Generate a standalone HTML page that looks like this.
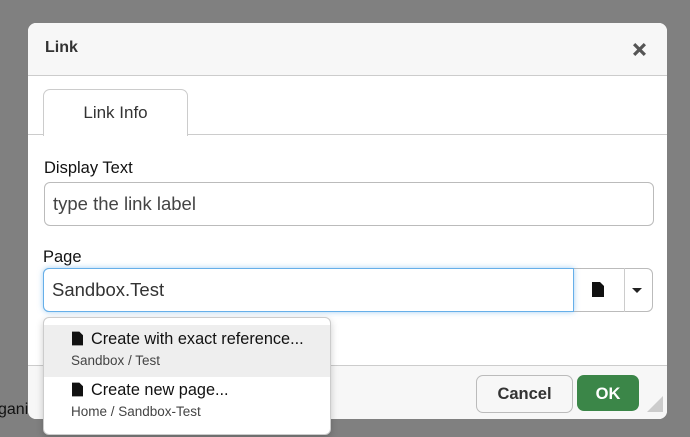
<!DOCTYPE html>
<html><head><style>
body{margin:0;width:690px;height:437px;background:#808080;position:relative;overflow:hidden;font-family:"Liberation Sans",Arial,sans-serif;color:#333}
.a{position:absolute}
.dlg{left:28px;top:23px;width:639px;height:396px;background:#fff;border-radius:8px;overflow:hidden}
.hdr{left:0;top:0;width:639px;height:52px;background:#f7f7f7;border-bottom:1px solid #ccc}
.fld{border:1px solid #bbb;border-radius:6px;background:#fff;box-sizing:border-box}
</style></head><body>
<div class="a" style="left:-2px;top:401px;font-size:16px;color:#111">gani</div>
<div class="a dlg">
 <div class="a hdr"></div>
 <div class="a" style="left:17px;top:16px;font-size:16px;font-weight:bold;color:#333">Link</div>
 <svg class="a" style="left:604px;top:19px" width="15" height="15" viewBox="0 0 14 14"><path d="M2 2L12 12M12 2L2 12" stroke="#555" stroke-width="3"/></svg>
 <div class="a" style="left:0;top:111px;width:639px;border-top:1px solid #ccc"></div>
 <div class="a" style="left:15px;top:66px;width:143px;height:46px;border:1px solid #ccc;border-bottom:none;border-radius:7px 7px 0 0;background:#fff;font-size:17px;text-align:center;line-height:46px">Link Info</div>
 <div class="a" style="left:16px;top:136px;font-size:16.5px;color:#111">Display Text</div>
 <div class="a fld" style="left:16px;top:159px;width:610px;height:44px;padding-left:8px;line-height:42px;font-size:18.5px;color:#444">type the link label</div>
 <div class="a" style="left:15px;top:225px;font-size:16.5px;color:#111">Page</div>
 <div class="a fld" style="left:15px;top:245px;width:610px;height:44px;"></div>
 <div class="a" style="left:15px;top:245px;width:531px;height:44px;border:1px solid #66afe9;border-radius:6px 0 0 6px;box-sizing:border-box;box-shadow:0 0 6px rgba(102,175,233,.6);padding-left:8px;line-height:42px;font-size:18.5px;color:#333;background:#fff">Sandbox.Test</div>
 <div class="a" style="left:596px;top:245px;height:44px;border-left:1px solid #ccc"></div>
 <svg class="a" style="left:564px;top:259px" width="12" height="15" viewBox="0 0 12 15"><path d="M0 0H8L12 4V15H0Z" fill="#111"/></svg>
 <svg class="a" style="left:604px;top:265px" width="10" height="6"><path d="M0 0H10L5 5Z" fill="#222"/></svg>
 <div class="a" style="left:0;top:342px;width:639px;border-top:1px solid #ccc;height:60px;background:#f7f7f7"></div>
 <div class="a" style="left:448px;top:352px;width:95px;height:36px;border:1px solid #bbb;border-radius:7px;background:#f7f7f7;font-size:16.5px;font-weight:bold;text-align:center;line-height:36px;color:#333">Cancel</div>
 <div class="a" style="left:549px;top:352px;width:62px;height:36px;border-radius:7px;background:#3b8648;font-size:16.5px;font-weight:bold;text-align:center;line-height:38px;color:#fff">OK</div>
 <svg class="a" style="left:619px;top:373px" width="16" height="16"><path d="M16 0V16H0Z" fill="#ccc"/></svg>
</div>
<div class="a" style="left:43px;top:317px;width:288px;height:118px;background:#fff;border:1px solid #ccc;border-radius:6px;box-sizing:border-box;box-shadow:0 3px 8px rgba(0,0,0,.2)">
 <div class="a" style="left:0;top:7px;width:286px;height:52px;background:#eee"></div>
 <svg class="a" style="left:28px;top:13px" width="11" height="15" viewBox="0 0 12 15"><path d="M0 0H8L12 4V15H0Z" fill="#111"/></svg>
 <div class="a" style="left:47px;top:12px;font-size:16.3px;color:#111">Create with exact reference...</div>
 <div class="a" style="left:27px;top:35px;font-size:13.5px;color:#444">Sandbox / Test</div>
 <svg class="a" style="left:28px;top:64px" width="11" height="15" viewBox="0 0 12 15"><path d="M0 0H8L12 4V15H0Z" fill="#111"/></svg>
 <div class="a" style="left:47px;top:63px;font-size:16.3px;color:#111">Create new page...</div>
 <div class="a" style="left:27px;top:86px;font-size:13.5px;color:#444">Home / Sandbox-Test</div>
</div>
</body></html>
